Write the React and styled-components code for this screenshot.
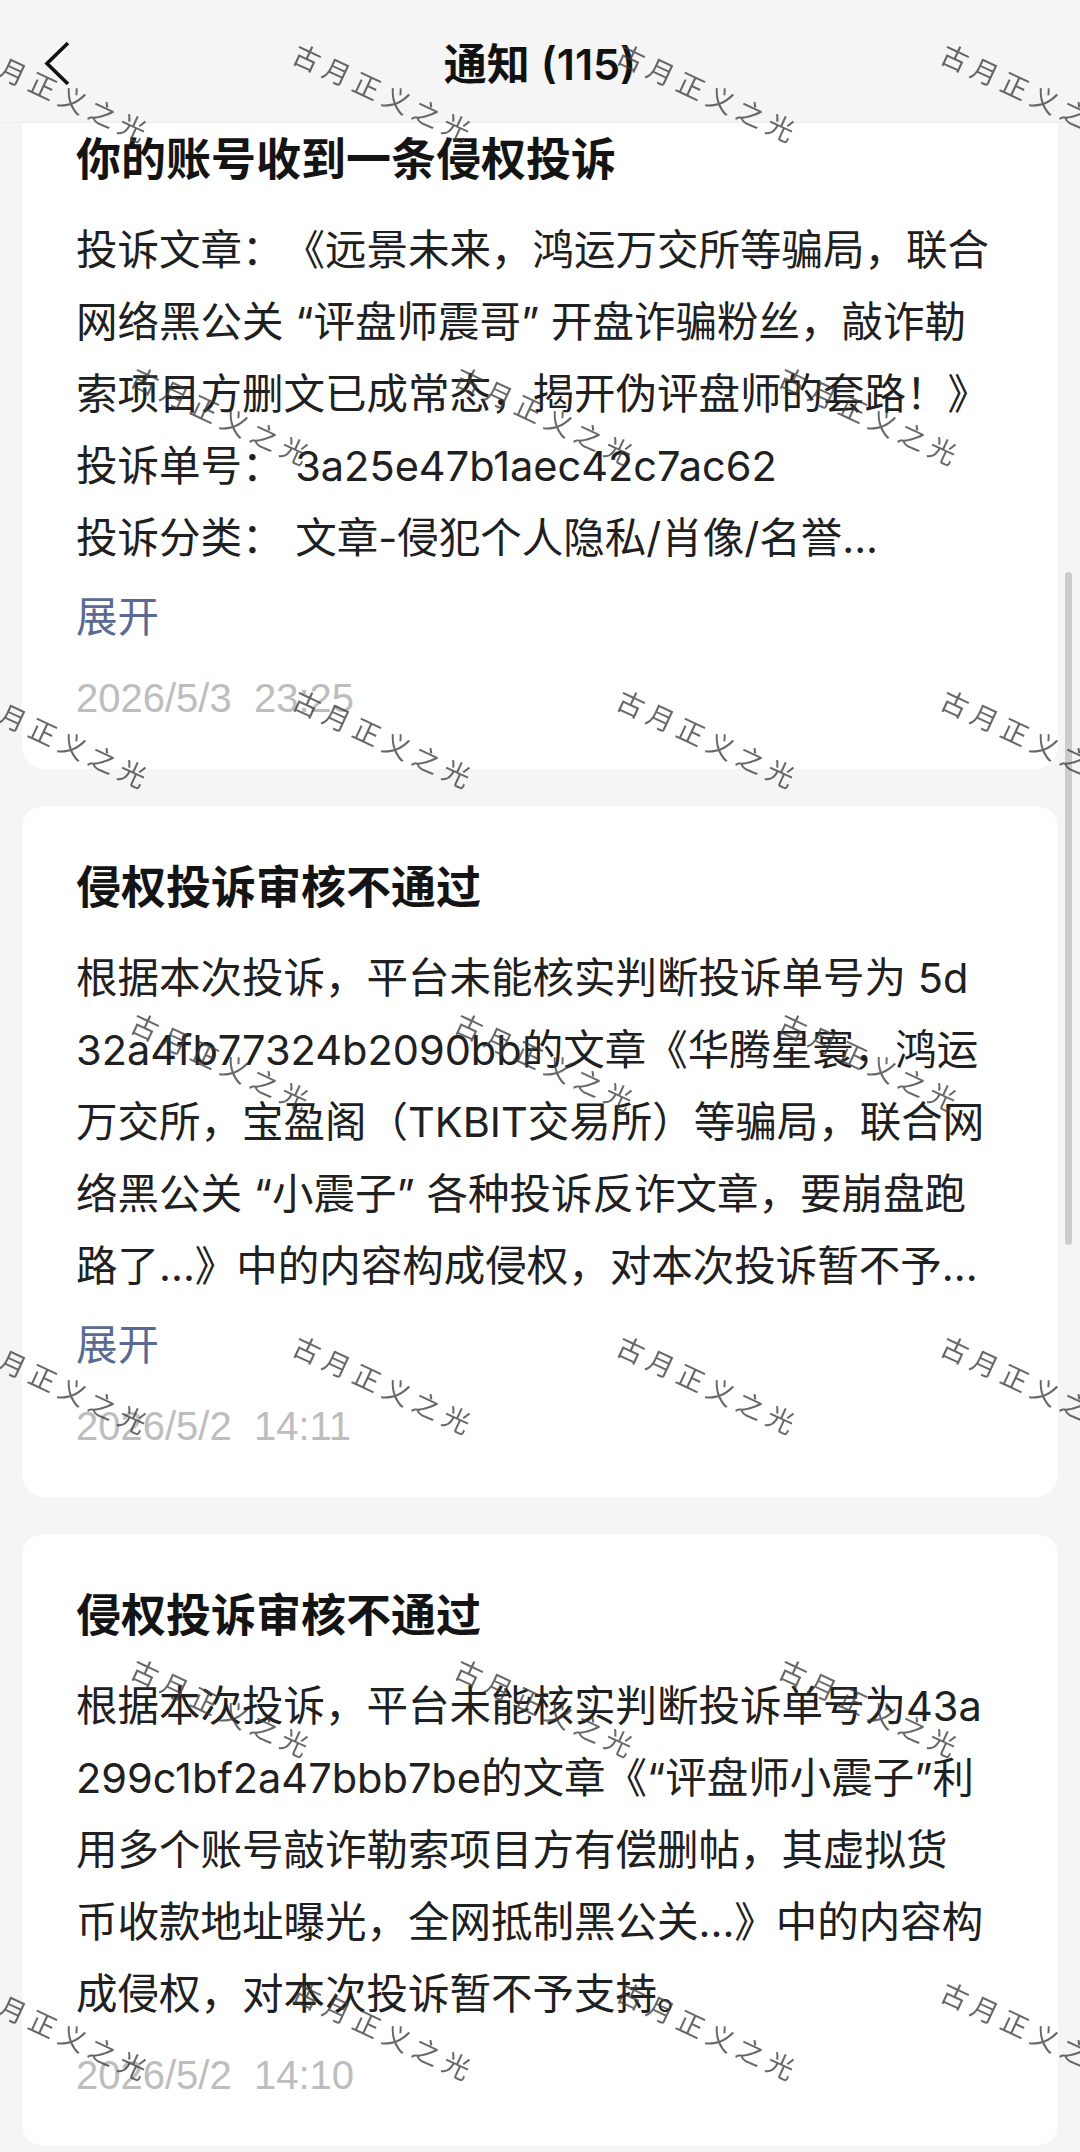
import React from 'react';
import styled, { createGlobalStyle } from 'styled-components';

const GlobalStyle = createGlobalStyle`
  html, body {
    margin: 0;
    padding: 0;
    background: #f4f5f4;
  }
  body {
    font-family: "Inter", "Noto Sans CJK SC", sans-serif;
    -webkit-font-smoothing: antialiased;
    text-spacing-trim: space-all;
  }
`;

const Page = styled.div`
  min-height: 2152px;
  background: #f4f5f4;
`;

const Header = styled.header`
  position: fixed;
  top: 0;
  left: 0;
  right: 0;
  height: 123px;
  box-sizing: border-box;
  padding-top: 6px;
  background: #f4f5f4;
  border-bottom: 1px solid #eceeec;
  display: grid;
  grid-template-columns: 1fr auto 1fr;
  align-items: center;
  z-index: 10;
`;

const BackButton = styled.button`
  justify-self: start;
  margin-left: 40px;
  width: 36px;
  height: 48px;
  padding: 0;
  border: 0;
  background: none;
  display: flex;
  align-items: center;
  justify-content: center;
`;

const Title = styled.h1`
  margin: 0;
  font-size: 43px;
  font-weight: 600;
  color: #111;
  line-height: 56px;
  white-space: nowrap;
`;

const List = styled.main`
  display: flex;
  flex-direction: column;
  gap: 37px;
  padding: 78px 22px 5px;
`;

const Card = styled.article`
  background: #ffffff;
  border-radius: 22px;
  padding: 52px 54px 46px;
  display: flex;
  flex-direction: column;
`;

const CardTitle = styled.h2`
  margin: 0 0 24px;
  font-size: 45px;
  line-height: 60px;
  font-weight: 600;
  color: #141414;
  white-space: nowrap;
`;

const Body = styled.div`
  font-size: 41.5px;
  line-height: 72px;
  color: #202020;
  text-spacing-trim: space-all;
`;

const Line = styled.span`
  display: block;
  white-space: nowrap;
`;

const Expand = styled.span`
  margin-top: 7px;
  font-size: 41.5px;
  line-height: 72px;
  color: #5a6a93;
`;

const DateText = styled.time`
  margin-top: 20px;
  font-family: "Liberation Sans", "Noto Sans CJK SC", sans-serif;
  font-size: 40px;
  line-height: 50px;
  color: #bdbdbd;
  white-space: pre;
`;

const Scrollbar = styled.div`
  position: fixed;
  right: 8px;
  top: 572px;
  width: 7px;
  height: 673px;
  border-radius: 4px;
  background: #cbcccb;
  z-index: 15;
`;

const WatermarkLayer = styled.div`
  position: fixed;
  inset: 0;
  pointer-events: none;
  overflow: hidden;
  z-index: 20;
`;

const Mark = styled.span`
  position: absolute;
  font-family: "Noto Sans CJK SC", sans-serif;
  font-size: 27px;
  font-weight: 400;
  letter-spacing: 6px;
  color: rgba(60, 60, 60, 0.78);
  white-space: nowrap;
  transform: translate(-50%, -50%) rotate(25deg);
  transform-origin: center;
`;

const cards = [
  {
    title: '你的账号收到一条侵权投诉',
    lines: [
      '投诉文章：《远景未来，鸿运万交所等骗局，联合',
      '网络黑公关 “评盘师震哥” 开盘诈骗粉丝，敲诈勒',
      '索项目方删文已成常态，揭开伪评盘师的套路！》',
      '投诉单号： 3a25e47b1aec42c7ac62',
      '投诉分类： 文章-侵犯个人隐私/肖像/名誉...',
    ],
    expand: true,
    date: '2026/5/3  23:25',
  },
  {
    title: '侵权投诉审核不通过',
    lines: [
      '根据本次投诉，平台未能核实判断投诉单号为 5d',
      '32a4fb77324b2090bb的文章《华腾星寰，鸿运',
      '万交所，宝盈阁（TKBIT交易所）等骗局，联合网',
      '络黑公关 “小震子” 各种投诉反诈文章，要崩盘跑',
      '路了...》中的内容构成侵权，对本次投诉暂不予...',
    ],
    expand: true,
    date: '2026/5/2  14:11',
  },
  {
    title: '侵权投诉审核不通过',
    lines: [
      '根据本次投诉，平台未能核实判断投诉单号为43a',
      '299c1bf2a47bbb7be的文章《“评盘师小震子”利',
      '用多个账号敲诈勒索项目方有偿删帖，其虚拟货',
      '币收款地址曝光，全网抵制黑公关...》中的内容构',
      '成侵权，对本次投诉暂不予支持。',
    ],
    expand: false,
    date: '2026/5/2  14:10',
  },
];

function buildMarks() {
  const marks = [];
  const colW = 324;
  const rowH = 646;
  for (let k = 0; k < 4; k++) {
    const y = 93 + rowH * k;
    for (let j = -1; j < 4; j++) {
      const x = 385 + colW * j;
      if (x > -120 && x < 1200) marks.push({ x, y });
    }
  }
  for (let k = 0; k < 4; k++) {
    const y = 416 + rowH * k;
    if (y > 2250) continue;
    for (let j = -1; j < 4; j++) {
      const x = 223 + colW * j;
      if (x > -90 && x < 1160) marks.push({ x, y });
    }
  }
  return marks;
}

const marks = buildMarks();

export default function App() {
  return (
    <Page>
      <GlobalStyle />
      <Header>
        <BackButton aria-label="返回">
          <svg width="36" height="48" viewBox="0 0 36 48" fill="none">
            <polyline
              points="28,3 7,23.5 28,44"
              stroke="#111"
              strokeWidth="3.6"
              strokeLinejoin="miter"
              fill="none"
            />
          </svg>
        </BackButton>
        <Title>通知 (115)</Title>
        <span />
      </Header>
      <List>
        {cards.map((c, i) => (
          <Card key={i}>
            <CardTitle>{c.title}</CardTitle>
            <Body>
              {c.lines.map((l, j) => (
                <Line key={j}>{l}</Line>
              ))}
            </Body>
            {c.expand && <Expand>展开</Expand>}
            <DateText>{c.date}</DateText>
          </Card>
        ))}
      </List>
      <Scrollbar />
      <WatermarkLayer>
        {marks.map((m, i) => (
          <Mark key={i} style={{ left: m.x, top: m.y }}>
            古月正义之光
          </Mark>
        ))}
      </WatermarkLayer>
    </Page>
  );
}
